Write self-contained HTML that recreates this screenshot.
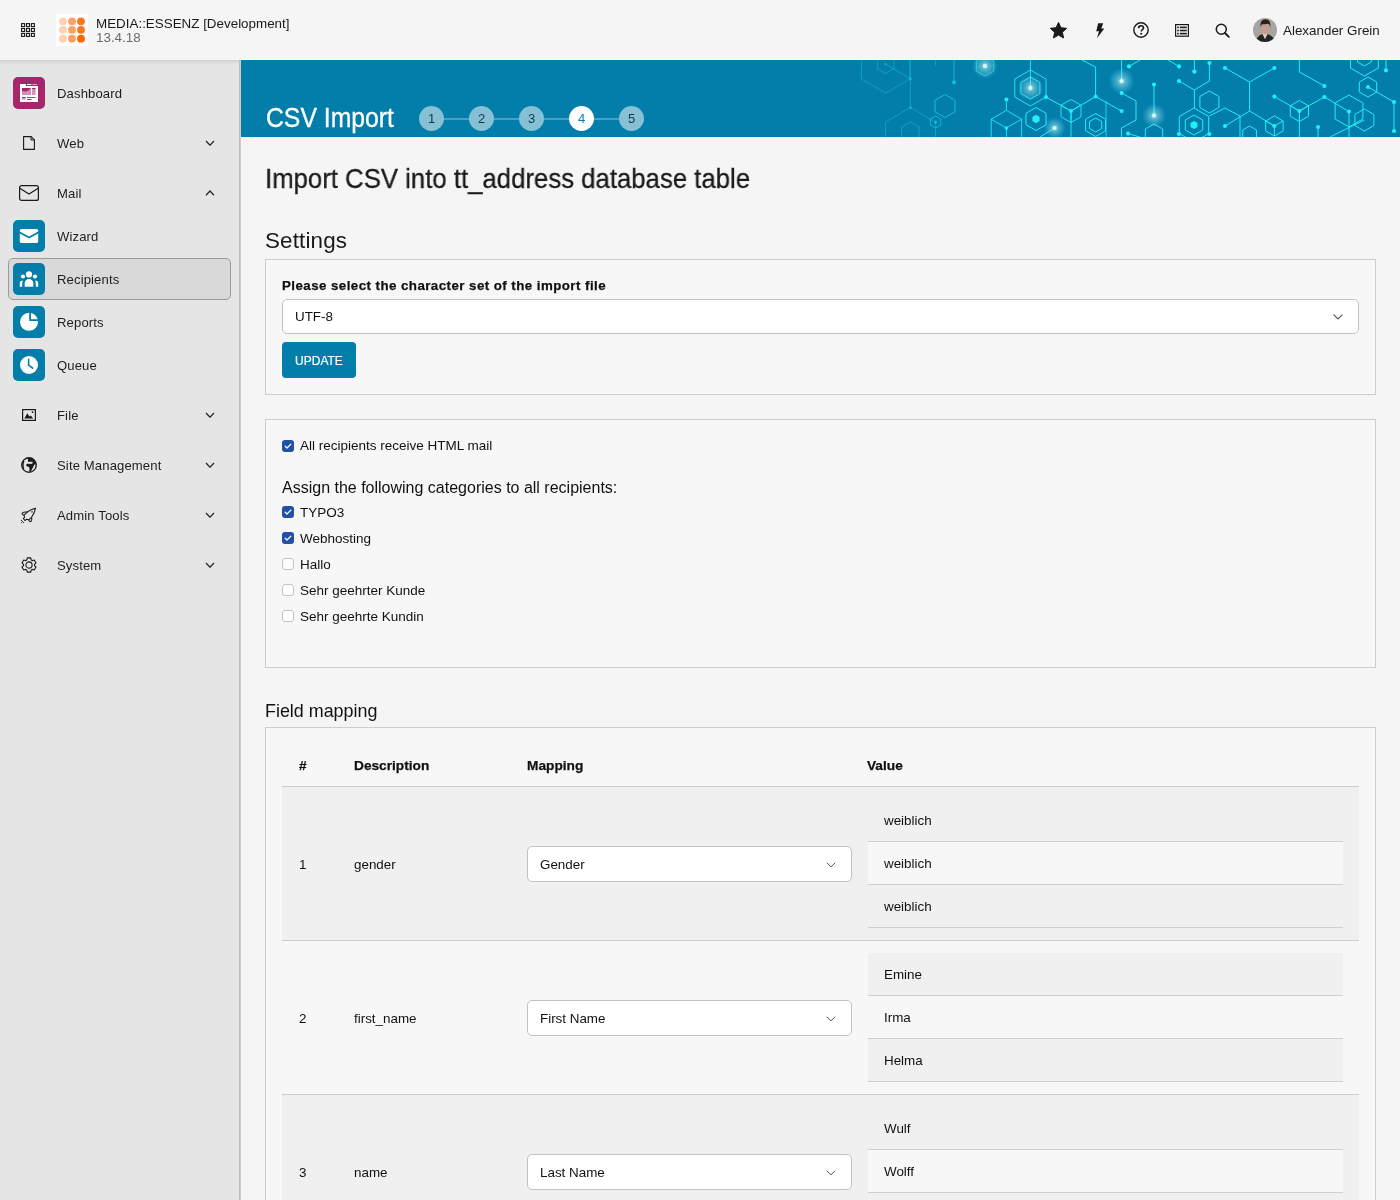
<!DOCTYPE html>
<html><head><meta charset="utf-8">
<style>
*{box-sizing:border-box;margin:0;padding:0}
html,body{width:1400px;height:1200px;overflow:hidden}
body{will-change:transform}
body{font-family:"Liberation Sans",sans-serif;color:#111;background:#f5f5f5;position:relative;font-size:13.4px}
.abs{position:absolute}
#hdr{left:0;top:0;width:1400px;height:60px;background:#f5f5f5}
#hdr:after{content:"";position:absolute;left:241px;top:59px;width:1159px;height:1px;background:#fdfdfd}
#side{left:0;top:60px;width:240px;height:1140px;background:#e5e5e5;border-right:1px solid #bcbcbc}
#side:after{content:"";position:absolute;left:0;top:0;width:239px;height:5px;background:linear-gradient(#d2d2d2,#e5e5e5)}
#sep{left:240px;top:60px;width:1px;height:1140px;background:#cfcbcb}
.mi{position:absolute;left:0;width:239px;height:40px}
.mi .t{position:absolute;left:57px;top:1px;line-height:40px;font-size:13.1px;letter-spacing:0.12px;color:#1e1e1e;white-space:nowrap}
.mi .ic{position:absolute;left:13px;top:4px;width:32px;height:32px;border-radius:5px;background:#037eab}
.mi svg.chev{position:absolute;left:205px;top:17px}
.t{white-space:nowrap}

.step{top:46px;width:25px;height:25px;border-radius:50%;background:#86c0d5;color:#13394a;font-size:13px;line-height:26px;text-align:center}
.step.cur{background:#fff;color:#037eab}
.panel{background:#f7f7f7;border:1px solid #cdcdcd}
.sel{background:#fff;border:1px solid #c2c2c2;border-radius:5px}
.sel .t{position:absolute;left:12px;top:0;line-height:33px;font-size:13.4px}
.sel svg{position:absolute}
.btn{background:#037eab;border-radius:4px;color:#fff;font-size:12px;line-height:38px;text-align:center;-webkit-text-stroke:0.2px #fff}
.th{top:758px;font-size:13.7px;line-height:16px;font-weight:bold;-webkit-text-stroke:0.25px #111;color:#111}
.cb{position:absolute;left:282px;width:12px;height:12px;border-radius:3px}
.cb.on{background:#1f51a6}
.cb.off{background:#fff;border:1px solid #c4c4c4}
.lbl{position:absolute;left:300px;margin-top:1px;font-size:13.5px;line-height:16px;white-space:nowrap}
.row{position:absolute;left:282px;width:1077px;height:154px;border-bottom:1px solid #cdcdcd}
.row.odd{background:#f0f0f0}
.row .c{position:absolute;top:1px;line-height:153px;font-size:13.4px;white-space:nowrap}
.vt{position:absolute;left:586px;top:12px;width:475px;background:#f7f7f7}
.vr{height:43px;border-bottom:1px solid #cfcfcf;line-height:44px;padding-left:16px;font-size:13.4px}
.vr.o{background:#f0f0f0}
</style></head>
<body>
<!-- HEADER -->
<div id="hdr" class="abs">
  <svg class="abs" style="left:21px;top:23px" width="14" height="14" viewBox="0 0 14 14">
    <g fill="none" stroke="#1a1a1a" stroke-width="1.1">
      <rect x="0.6" y="0.6" width="3" height="3"/><rect x="5.5" y="0.6" width="3" height="3"/><rect x="10.4" y="0.6" width="3" height="3"/>
      <rect x="0.6" y="5.5" width="3" height="3"/><rect x="5.5" y="5.5" width="3" height="3"/><rect x="10.4" y="5.5" width="3" height="3"/>
      <rect x="0.6" y="10.4" width="3" height="3"/><rect x="5.5" y="10.4" width="3" height="3"/><rect x="10.4" y="10.4" width="3" height="3"/>
    </g>
  </svg>
  <div class="abs" style="left:56px;top:14px;width:32px;height:32px;background:#fff"></div>
  <svg class="abs" style="left:56px;top:14px" width="32" height="32" viewBox="0 0 32 32">
    <g>
      <circle cx="7" cy="7.300000000000001" r="3.9" fill="#ffd0b2"/><circle cx="16" cy="7.300000000000001" r="3.9" fill="#ffa066"/><circle cx="25" cy="7.300000000000001" r="3.9" fill="#ff761a"/><circle cx="7" cy="15.850000000000001" r="3.9" fill="#ffd0b2"/><circle cx="16" cy="15.850000000000001" r="3.9" fill="#ffa066"/><circle cx="25" cy="15.850000000000001" r="3.9" fill="#ff761a"/><circle cx="7" cy="24.7" r="3.9" fill="#ffd0b2"/><circle cx="16" cy="24.7" r="3.9" fill="#ffa066"/><circle cx="25" cy="24.7" r="3.9" fill="#ff6600"/>
    </g>
  </svg>
  <div class="abs t" style="left:96px;top:16px;font-size:13.4px;line-height:16px;color:#1a1a1a">MEDIA::ESSENZ [Development]</div>
  <div class="abs t" style="left:96px;top:30px;font-size:13.4px;line-height:16px;color:#6b6b6b">13.4.18</div>

  <!-- toolbar icons -->
  <svg class="abs" style="left:1050px;top:22px" width="17" height="17" viewBox="0 0 17 17"><path fill="#1a1a1a" stroke="#1a1a1a" stroke-width="1" stroke-linejoin="round" d="M8.50 0.40 L10.91 5.68 L16.68 6.34 L12.40 10.27 L13.55 15.96 L8.50 13.10 L3.45 15.96 L4.60 10.27 L0.32 6.34 L6.09 5.68z"/></svg>
  <svg class="abs" style="left:1094px;top:23px" width="12" height="16" viewBox="0 0 12 16"><path fill="#1a1a1a" d="M4.2 0.3h5L7.3 5.6h3L3 15.2l2-7H2.2z"/></svg>
  <svg class="abs" style="left:1133px;top:22px" width="16" height="16" viewBox="0 0 16 16"><circle cx="8" cy="8" r="7.2" fill="none" stroke="#1a1a1a" stroke-width="1.4"/><path d="M5.6 6.2c0-1.5 1.1-2.4 2.5-2.4s2.4.9 2.4 2.1c0 1.7-2.2 1.8-2.2 3.5" fill="none" stroke="#1a1a1a" stroke-width="1.6"/><circle cx="8.2" cy="11.7" r="1.05" fill="#1a1a1a"/></svg>
  <svg class="abs" style="left:1175px;top:24px" width="14" height="13" viewBox="0 0 14 13"><rect x="0.6" y="0.6" width="12.8" height="11.6" fill="none" stroke="#1a1a1a" stroke-width="1.2"/><rect x="2.2" y="2.6" width="1.6" height="1.6" fill="#1a1a1a"/><rect x="2.2" y="5.7" width="1.6" height="1.6" fill="#1a1a1a"/><rect x="2.2" y="8.8" width="1.6" height="1.6" fill="#1a1a1a"/><rect x="4.8" y="2.6" width="7" height="1.6" fill="#1a1a1a"/><rect x="4.8" y="5.7" width="7" height="1.6" fill="#1a1a1a"/><rect x="4.8" y="8.8" width="7" height="1.6" fill="#1a1a1a"/></svg>
  <svg class="abs" style="left:1215px;top:23px" width="16" height="16" viewBox="0 0 16 16"><circle cx="6.3" cy="6.3" r="5" fill="none" stroke="#1a1a1a" stroke-width="1.5"/><path d="M10 10l3.8 3.8" stroke="#1a1a1a" stroke-width="1.9" stroke-linecap="round"/></svg>
  <!-- avatar -->
  <svg class="abs" style="left:1253px;top:18px" width="24" height="24" viewBox="0 0 24 24">
    <defs><clipPath id="av"><circle cx="12" cy="12" r="12"/></clipPath></defs>
    <g clip-path="url(#av)"><rect width="24" height="24" fill="#a6a5a3"/><path d="M2.5 24C3.5 19.5 6.5 17 9.5 16L12 21 14.5 16C17 17 20 18.5 21.8 22V24z" fill="#242424"/><path d="M9.3 15.3L12 21l2.7-5.7z" fill="#e2cbb6"/><ellipse cx="12.3" cy="10.8" rx="4.3" ry="5.2" fill="#c49e90"/><path d="M7.6 9.2C7 4 9 1.3 12.5 1.3S17.9 4 17.3 9.6C16.9 7.2 16.2 6.3 15.2 5.7 13 6.3 10.6 6 8.7 6.5 8.1 7.3 7.8 8.2 7.6 9.2z" fill="#2a211c"/></g>
  </svg>
  <div class="abs t" style="left:1283px;top:23px;font-size:13.4px;line-height:16px;color:#1a1a1a">Alexander Grein</div>
</div>

<!-- SIDEBAR -->
<div id="side" class="abs"></div>
<div id="sep" class="abs"></div>

<div id="menu">
<div class="abs" style="left:8px;top:258px;width:223px;height:42px;border:1px solid #9a9a9a;border-radius:5px;background:#d9d9d9"></div>
<div class="mi" style="top:73px"><div class="ic" style="background:#a5266b"><svg width="32" height="32" viewBox="0 0 32 32" style="position:absolute;left:0;top:0"><path fill="#fff" d="M7 7h5.8v1.9H25V25H7z"/><rect x="13.8" y="7" width="4.6" height="1" fill="#fff"/><rect x="19.4" y="7" width="4.6" height="1" fill="#e2aacb"/><rect x="9" y="11" width="8.8" height="6.9" fill="#a5266b"/><path fill="#d48fb8" d="M9 14.6c1-.6 1.8-.9 2.5-.4.8.6 1.5.2 2.3 0 1.5-.4 3-2 4-3.2v6.9H9z"/><rect x="19" y="11" width="3.6" height="6.9" fill="#d48fb8"/><rect x="19" y="11" width="3.6" height="1" fill="#a5266b"/><rect x="9" y="20" width="3.6" height="2.6" fill="#d48fb8"/><rect x="9" y="20" width="3.6" height="0.9" fill="#a5266b"/><rect x="14" y="20" width="8.6" height="0.9" fill="#a5266b"/><rect x="14" y="22" width="4.6" height="0.9" fill="#a5266b"/></svg></div><div class="t">Dashboard</div></div>
<div class="mi" style="top:123px"><svg style="position:absolute;left:23px;top:13px" width="12" height="14" viewBox="0 0 12 14"><path d="M.6.6h7.6L11.4 3.8v9.6H.6z" fill="none" stroke="#1a1a1a" stroke-width="1.1" stroke-linejoin="round"/><path d="M8 .6v3.4h3.4" fill="none" stroke="#1a1a1a" stroke-width="1"/></svg><div class="t">Web</div><svg class="chev" width="10" height="6" viewBox="0 0 10 6"><path d="M1 1L5 5.2 9 1" fill="none" stroke="#2a2a2a" stroke-width="1.3"/></svg></div>
<div class="mi" style="top:173px"><svg style="position:absolute;left:19px;top:12px" width="20" height="16" viewBox="0 0 20 16"><rect x=".6" y=".6" width="18.8" height="14.8" rx="2" fill="none" stroke="#1a1a1a" stroke-width="1.2"/><path d="M.8 3.2L10 9l9.2-5.8" fill="none" stroke="#1a1a1a" stroke-width="1.2"/></svg><div class="t">Mail</div><svg class="chev" width="10" height="6" viewBox="0 0 10 6"><path d="M1 5.2L5 1l4 4.2" fill="none" stroke="#2a2a2a" stroke-width="1.3"/></svg></div>
<div class="mi" style="top:216px"><div class="ic"><svg width="32" height="32" viewBox="0 0 32 32" style="position:absolute;left:0;top:0"><path fill="#fff" d="M6.8 10.8c0-1 .8-1.8 1.8-1.8h14.8c1 0 1.8.8 1.8 1.8v.6L16 16.6 6.8 11.4z"/><path fill="#fff" d="M6.8 13.4L16 18.6l9.2-5.2v7.8c0 1-.8 1.8-1.8 1.8H8.6c-1 0-1.8-.8-1.8-1.8z"/></svg></div><div class="t">Wizard</div></div>
<div class="mi" style="top:259px"><div class="ic"><svg width="32" height="32" viewBox="0 0 32 32" style="position:absolute;left:0;top:0"><g fill="#fff"><circle cx="16" cy="11.4" r="3.1"/><circle cx="10" cy="13.5" r="2.1"/><circle cx="22" cy="13.5" r="2.1"/><path d="M11.7 23.7v-3.5c0-2.6 1.9-4.3 4.3-4.3s4.3 1.7 4.3 4.3v3.5z"/><path d="M6.8 23.7v-3.3c0-1.3.6-2.3 1.6-2.7l1.6.1c-.5.8-.8 1.7-.8 2.8v3.1z"/><path d="M25.2 23.7v-3.3c0-1.3-.6-2.3-1.6-2.7l-1.6.1c.5.8.8 1.7.8 2.8v3.1z"/></g></svg></div><div class="t">Recipients</div></div>
<div class="mi" style="top:302px"><div class="ic"><svg width="32" height="32" viewBox="0 0 32 32" style="position:absolute;left:0;top:0"><path fill="#fff" d="M16.2 6.8V14.9H24.95A9 9 0 1 1 16.2 6.8z"/><path fill="#fff" d="M18 7.03V13.3H24.65A9 9 0 0 0 18 7.03z"/></svg></div><div class="t">Reports</div></div>
<div class="mi" style="top:345px"><div class="ic"><svg width="32" height="32" viewBox="0 0 32 32" style="position:absolute;left:0;top:0"><circle cx="16" cy="16" r="9" fill="#fff"/><path d="M15.6 10.4V16l4 3.2" fill="none" stroke="#037eab" stroke-width="1.6" stroke-linecap="round"/></svg></div><div class="t">Queue</div></div>
<div class="mi" style="top:395px"><svg style="position:absolute;left:22px;top:14px" width="14" height="12" viewBox="0 0 14 12"><rect x=".6" y=".6" width="12.8" height="10.8" fill="none" stroke="#1a1a1a" stroke-width="1.2"/><path d="M2.3 9.6l3-5.3 2.1 3.3 1.4-1.2 2.4 3.2z" fill="#1a1a1a"/><circle cx="10.6" cy="3.1" r=".95" fill="#1a1a1a"/></svg><div class="t">File</div><svg class="chev" width="10" height="6" viewBox="0 0 10 6"><path d="M1 1L5 5.2 9 1" fill="none" stroke="#2a2a2a" stroke-width="1.3"/></svg></div>
<div class="mi" style="top:445px"><svg style="position:absolute;left:21px;top:12px" width="16" height="16" viewBox="0 0 16 16"><circle cx="8" cy="8" r="7.25" fill="none" stroke="#1a1a1a" stroke-width="1.4"/><path fill="#1a1a1a" d="M7.2 1C10 .7 13.4 2 14.7 6.2L14.6 6.8 13 8.3 10 14.3 9.3 14.9 8.4 14.6 8.4 11 8 9.8C6.6 9.7 5.3 9.5 5.2 8.2 5.2 7.1 6 6.6 7.2 6.7L11.4 6.7 11.6 4.8 7.1 4.8C6.7 3.5 6.8 2.3 7.2 1z"/><rect x="7.6" y="5.1" width="3.4" height="1.3" fill="#e5e5e5"/><path fill="#1a1a1a" d="M2.4 3.4C1 5.5.9 9.4 2.6 12.6L3.3 12.1C2.4 9.4 2.4 6.2 3.5 4.1z"/></svg><div class="t">Site Management</div><svg class="chev" width="10" height="6" viewBox="0 0 10 6"><path d="M1 1L5 5.2 9 1" fill="none" stroke="#2a2a2a" stroke-width="1.3"/></svg></div>
<div class="mi" style="top:495px"><svg style="position:absolute;left:21px;top:12px" width="16" height="17" viewBox="0 0 16 17"><g fill="none" stroke="#1a1a1a" stroke-width="1.05" stroke-linejoin="round"><path d="M14.5 1.2C11.3 2 8.7 3.2 6.7 4.8L2.7 5.2Q1 5.5 1 6.8L3.2 8.6 3.5 10.4 2.4 11.7 3.9 13.5 5.4 12.3 7.3 12.6 9 14.8Q10.5 14.7 10.7 13L10.7 10C12.5 7.6 14 4.6 14.5 1.2z"/><path d="M2.9 8.2L6.7 4.8M7.9 12.9L10.7 10"/></g><rect x="10.4" y="4.2" width="1.3" height="1.3" fill="#1a1a1a"/><g fill="#1a1a1a"><circle cx=".6" cy="13.4" r=".55"/><circle cx="1.6" cy="14.5" r=".55"/><circle cx="2.6" cy="15.6" r=".55"/><circle cx=".6" cy="15.6" r=".55"/></g></svg><div class="t">Admin Tools</div><svg class="chev" width="10" height="6" viewBox="0 0 10 6"><path d="M1 1L5 5.2 9 1" fill="none" stroke="#2a2a2a" stroke-width="1.3"/></svg></div>
<div class="mi" style="top:545px"><svg style="position:absolute;left:21px;top:12px" width="16" height="16" viewBox="0 0 16 16"><path d="M5.76 2.98 L6.36 0.89 L9.64 0.89 L10.24 2.98 L11.23 3.55 L13.34 3.02 L14.98 5.87 L13.47 7.43 L13.47 8.57 L14.98 10.13 L13.34 12.98 L11.23 12.45 L10.24 13.02 L9.64 15.11 L6.36 15.11 L5.76 13.02 L4.77 12.45 L2.66 12.98 L1.02 10.13 L2.53 8.57 L2.53 7.43 L1.02 5.87 L2.66 3.02 L4.77 3.55z" fill="none" stroke="#1a1a1a" stroke-width="1.1" stroke-linejoin="miter"/><circle cx="8" cy="8" r="3.1" fill="none" stroke="#1a1a1a" stroke-width="1.1"/></svg><div class="t">System</div><svg class="chev" width="10" height="6" viewBox="0 0 10 6"><path d="M1 1L5 5.2 9 1" fill="none" stroke="#2a2a2a" stroke-width="1.3"/></svg></div>
</div>

<!-- MAIN -->
<div id="main">
<!-- banner -->
<div class="abs" style="left:241px;top:60px;width:1159px;height:77px;background:#037eab;overflow:hidden">
  <svg id="pat" class="abs" style="left:0;top:0" width="1159" height="77" viewBox="241 60 1159 77"><defs><radialGradient id="gl"><stop offset="0" stop-color="#fff" stop-opacity="0.95"/><stop offset="0.25" stop-color="#cff" stop-opacity="0.45"/><stop offset="1" stop-color="#8ef" stop-opacity="0"/></radialGradient></defs><polygon points="885.6,37.0 909.8,51.0 909.8,79.0 885.6,93.0 861.4,79.0 861.4,51.0" fill="none" stroke="#22eef4" stroke-width="1" opacity="0.3"/><polygon points="885.6,54.5 893.8,59.2 893.8,68.8 885.6,73.5 877.4,68.8 877.4,59.2" fill="none" stroke="#22eef4" stroke-width="1" opacity="0.3"/><circle cx="885.6" cy="64.0" r="1.5" fill="#22eef4" opacity="0.3"/><polyline points="910.4,60.0 910.4,107.6" fill="none" stroke="#22eef4" stroke-width="1" opacity="0.3"/><circle cx="910.4" cy="78.8" r="1.6" fill="#22eef4" opacity="0.3"/><circle cx="910.4" cy="107.6" r="1.6" fill="#22eef4" opacity="0.3"/><polyline points="885.6,64.0 910.4,78.8" fill="none" stroke="#22eef4" stroke-width="1" opacity="0.3"/><polyline points="910.4,107.6 885.6,122.0 885.6,137.0" fill="none" stroke="#22eef4" stroke-width="1" opacity="0.3"/><polyline points="910.4,107.6 935.6,122.0 935.6,137.0" fill="none" stroke="#22eef4" stroke-width="1" opacity="0.3"/><polygon points="910.4,122.0 919.1,127.0 919.1,137.0 910.4,142.0 901.7,137.0 901.7,127.0" fill="none" stroke="#22eef4" stroke-width="1" opacity="0.3"/><polygon points="935.6,116.0 940.8,119.0 940.8,125.0 935.6,128.0 930.4,125.0 930.4,119.0" fill="none" stroke="#22eef4" stroke-width="1" opacity="0.5"/><circle cx="935.6" cy="122.0" r="1.6" fill="#22eef4" opacity="0.5"/><polyline points="935.6,60.0 935.6,66.0" fill="none" stroke="#22eef4" stroke-width="1" opacity="0.3"/><polyline points="954.0,60.0 954.0,82.6" fill="none" stroke="#22eef4" stroke-width="1" opacity="0.55"/><circle cx="954.0" cy="82.6" r="2" fill="#22eef4" opacity="0.55"/><polygon points="945.0,94.5 955.0,100.2 955.0,111.8 945.0,117.5 935.0,111.8 935.0,100.2" fill="none" stroke="#22eef4" stroke-width="1" opacity="0.55"/><polygon points="985.0,56.0 993.7,61.0 993.7,71.0 985.0,76.0 976.3,71.0 976.3,61.0" fill="none" stroke="#22eef4" stroke-width="1" opacity="0.6"/><polygon points="1006.4,110.4 1021.6,119.2 1021.6,136.8 1006.4,145.6 991.2,136.8 991.2,119.2" fill="none" stroke="#22eef4" stroke-width="1" opacity="0.85"/><polyline points="1006.4,128.0 1006.4,145.6" fill="none" stroke="#22eef4" stroke-width="1" opacity="0.85"/><polyline points="1006.4,128.0 991.2,119.2" fill="none" stroke="#22eef4" stroke-width="1" opacity="0.85"/><polyline points="1006.4,128.0 1021.6,119.2" fill="none" stroke="#22eef4" stroke-width="1" opacity="0.85"/><polyline points="1006.4,99.4 1006.4,110.4" fill="none" stroke="#22eef4" stroke-width="1" opacity="0.85"/><circle cx="1006.4" cy="99.4" r="2" fill="#22eef4" opacity="1"/><circle cx="1006.4" cy="128.0" r="1.8" fill="#22eef4" opacity="1"/><polygon points="1030.4,70.0 1046.0,79.0 1046.0,97.0 1030.4,106.0 1014.8,97.0 1014.8,79.0" fill="none" stroke="#22eef4" stroke-width="1" opacity="0.9"/><polygon points="1030.4,77.0 1039.9,82.5 1039.9,93.5 1030.4,99.0 1020.9,93.5 1020.9,82.5" fill="none" stroke="#22eef4" stroke-width="1" opacity="0.9"/><polyline points="1030.4,60.0 1030.4,88.0" fill="none" stroke="#22eef4" stroke-width="1" opacity="0.9"/><circle cx="1046.0" cy="97.0" r="2" fill="#22eef4" opacity="1"/><polyline points="1046.0,97.0 1071.0,111.0" fill="none" stroke="#22eef4" stroke-width="1" opacity="1"/><circle cx="1071.0" cy="111.0" r="2" fill="#22eef4" opacity="1"/><polygon points="1071.0,99.5 1081.0,105.2 1081.0,116.8 1071.0,122.5 1061.0,116.8 1061.0,105.2" fill="none" stroke="#22eef4" stroke-width="1" opacity="0.9"/><polyline points="1071.0,111.0 1071.0,122.5" fill="none" stroke="#22eef4" stroke-width="1" opacity="0.9"/><polyline points="1071.0,111.0 1061.0,105.2" fill="none" stroke="#22eef4" stroke-width="1" opacity="0.9"/><polyline points="1071.0,111.0 1081.0,105.2" fill="none" stroke="#22eef4" stroke-width="1" opacity="0.9"/><polyline points="1071.0,111.0 1071.0,137.0" fill="none" stroke="#22eef4" stroke-width="1" opacity="0.9"/><circle cx="1095.6" cy="96.6" r="2" fill="#22eef4" opacity="1"/><polyline points="1071.0,111.0 1095.6,96.6" fill="none" stroke="#22eef4" stroke-width="1" opacity="1"/><polyline points="1095.6,96.6 1095.6,67.0 1082.0,60.0" fill="none" stroke="#22eef4" stroke-width="1" opacity="1"/><polyline points="1095.6,96.6 1121.6,111.0" fill="none" stroke="#22eef4" stroke-width="1" opacity="1"/><polygon points="1036.0,107.5 1046.0,113.2 1046.0,124.8 1036.0,130.5 1026.0,124.8 1026.0,113.2" fill="none" stroke="#22eef4" stroke-width="1" opacity="1"/><polygon points="1036.0,114.8 1039.6,116.9 1039.6,121.1 1036.0,123.2 1032.4,121.1 1032.4,116.9" fill="#22eef4" opacity="1"/><polyline points="1054.6,128.0 1040.0,137.0" fill="none" stroke="#22eef4" stroke-width="1" opacity="1"/><polygon points="1095.6,113.5 1105.6,119.2 1105.6,130.8 1095.6,136.5 1085.6,130.8 1085.6,119.2" fill="none" stroke="#22eef4" stroke-width="1" opacity="1"/><polygon points="1095.6,118.0 1101.7,121.5 1101.7,128.5 1095.6,132.0 1089.5,128.5 1089.5,121.5" fill="none" stroke="#22eef4" stroke-width="1" opacity="1"/><polyline points="1106.0,101.0 1106.0,137.0" fill="none" stroke="#22eef4" stroke-width="1" opacity="0.8"/><polyline points="1121.6,60.0 1121.6,81.0" fill="none" stroke="#22eef4" stroke-width="1" opacity="1"/><circle cx="1129.0" cy="66.4" r="2.1" fill="#22eef4" opacity="1"/><polyline points="1129.0,66.4 1140.0,60.0" fill="none" stroke="#22eef4" stroke-width="1" opacity="1"/><polyline points="1168.0,60.0 1179.0,66.4" fill="none" stroke="#22eef4" stroke-width="1" opacity="1"/><circle cx="1179.0" cy="66.4" r="2.1" fill="#22eef4" opacity="1"/><polyline points="1194.4,60.0 1194.4,71.6" fill="none" stroke="#22eef4" stroke-width="1" opacity="1"/><circle cx="1194.4" cy="71.6" r="2.2" fill="#22eef4" opacity="1"/><circle cx="1209.4" cy="63.0" r="2.1" fill="#22eef4" opacity="1"/><polyline points="1209.4,63.0 1209.4,81.0 1194.4,90.0 1179.0,81.0" fill="none" stroke="#22eef4" stroke-width="1" opacity="1"/><circle cx="1179.0" cy="81.0" r="2.1" fill="#22eef4" opacity="1"/><polyline points="1194.4,90.0 1194.4,108.0" fill="none" stroke="#22eef4" stroke-width="1" opacity="1"/><circle cx="1154.0" cy="84.6" r="2.1" fill="#22eef4" opacity="1"/><polyline points="1154.0,84.6 1154.0,115.6" fill="none" stroke="#22eef4" stroke-width="1" opacity="1"/><polygon points="1209.4,91.0 1218.9,96.5 1218.9,107.5 1209.4,113.0 1199.9,107.5 1199.9,96.5" fill="none" stroke="#22eef4" stroke-width="1" opacity="1"/><polygon points="1194.0,108.0 1208.7,116.5 1208.7,133.5 1194.0,142.0 1179.3,133.5 1179.3,116.5" fill="none" stroke="#22eef4" stroke-width="1" opacity="1"/><polygon points="1194.0,115.0 1202.7,120.0 1202.7,130.0 1194.0,135.0 1185.3,130.0 1185.3,120.0" fill="none" stroke="#22eef4" stroke-width="1" opacity="1"/><polygon points="1194.0,121.0 1197.5,123.0 1197.5,127.0 1194.0,129.0 1190.5,127.0 1190.5,123.0" fill="#22eef4" opacity="1"/><polyline points="1121.6,93.0 1136.0,101.0 1136.0,120.0 1121.6,128.0 1121.6,137.0" fill="none" stroke="#22eef4" stroke-width="1" opacity="1"/><circle cx="1121.6" cy="93.0" r="2.1" fill="#22eef4" opacity="1"/><circle cx="1121.6" cy="111.0" r="2.1" fill="#22eef4" opacity="1"/><circle cx="1128.0" cy="133.6" r="2.1" fill="#22eef4" opacity="1"/><polyline points="1128.0,133.6 1140.0,137.0" fill="none" stroke="#22eef4" stroke-width="1" opacity="1"/><polygon points="1154.0,124.0 1162.7,129.0 1162.7,139.0 1154.0,144.0 1145.3,139.0 1145.3,129.0" fill="none" stroke="#22eef4" stroke-width="1" opacity="1"/><circle cx="1179.0" cy="134.0" r="2.1" fill="#22eef4" opacity="1"/><circle cx="1209.4" cy="134.0" r="2.1" fill="#22eef4" opacity="1"/><circle cx="1225.0" cy="68.0" r="2.1" fill="#22eef4" opacity="1"/><circle cx="1274.4" cy="68.0" r="2.1" fill="#22eef4" opacity="1"/><polyline points="1225.0,68.0 1249.6,82.0 1274.4,68.0" fill="none" stroke="#22eef4" stroke-width="1" opacity="1"/><polyline points="1249.6,82.0 1249.6,111.0" fill="none" stroke="#22eef4" stroke-width="1" opacity="1"/><polyline points="1225.0,126.0 1249.6,111.0 1274.4,126.0" fill="none" stroke="#22eef4" stroke-width="1" opacity="1"/><circle cx="1225.0" cy="126.0" r="2.1" fill="#22eef4" opacity="1"/><polyline points="1209.4,116.0 1225.0,108.0 1240.0,116.0 1240.0,137.0" fill="none" stroke="#22eef4" stroke-width="1" opacity="1"/><polygon points="1274.4,116.0 1283.1,121.0 1283.1,131.0 1274.4,136.0 1265.7,131.0 1265.7,121.0" fill="none" stroke="#22eef4" stroke-width="1" opacity="1"/><polyline points="1274.4,126.0 1274.4,136.0" fill="none" stroke="#22eef4" stroke-width="1" opacity="1"/><polyline points="1274.4,126.0 1265.7,121.0" fill="none" stroke="#22eef4" stroke-width="1" opacity="1"/><polyline points="1274.4,126.0 1283.1,121.0" fill="none" stroke="#22eef4" stroke-width="1" opacity="1"/><circle cx="1274.4" cy="126.0" r="2.1" fill="#22eef4" opacity="1"/><polygon points="1249.6,126.0 1256.5,130.0 1256.5,138.0 1249.6,142.0 1242.7,138.0 1242.7,130.0" fill="none" stroke="#22eef4" stroke-width="1" opacity="1"/><polyline points="1299.4,60.0 1299.4,72.0 1324.4,86.0" fill="none" stroke="#22eef4" stroke-width="1" opacity="1"/><circle cx="1324.4" cy="86.0" r="2.1" fill="#22eef4" opacity="1"/><circle cx="1274.4" cy="96.6" r="2.1" fill="#22eef4" opacity="1"/><polyline points="1274.4,96.6 1299.4,111.0" fill="none" stroke="#22eef4" stroke-width="1" opacity="1"/><polygon points="1299.4,100.5 1308.5,105.8 1308.5,116.2 1299.4,121.5 1290.3,116.2 1290.3,105.8" fill="none" stroke="#22eef4" stroke-width="1" opacity="1"/><polyline points="1299.4,111.0 1299.4,121.5" fill="none" stroke="#22eef4" stroke-width="1" opacity="1"/><polyline points="1299.4,111.0 1290.3,105.8" fill="none" stroke="#22eef4" stroke-width="1" opacity="1"/><polyline points="1299.4,111.0 1308.5,105.8" fill="none" stroke="#22eef4" stroke-width="1" opacity="1"/><polyline points="1299.4,111.0 1299.4,137.0" fill="none" stroke="#22eef4" stroke-width="1" opacity="1"/><circle cx="1299.4" cy="111.0" r="2.1" fill="#22eef4" opacity="1"/><polyline points="1299.4,111.0 1324.4,97.0 1349.0,111.6 1349.0,137.0" fill="none" stroke="#22eef4" stroke-width="1" opacity="1"/><circle cx="1324.4" cy="97.0" r="2.1" fill="#22eef4" opacity="1"/><circle cx="1349.0" cy="111.6" r="2.1" fill="#22eef4" opacity="1"/><polygon points="1349.0,95.0 1362.9,103.0 1362.9,119.0 1349.0,127.0 1335.1,119.0 1335.1,103.0" fill="none" stroke="#22eef4" stroke-width="1" opacity="1"/><polygon points="1364.4,109.0 1373.9,114.5 1373.9,125.5 1364.4,131.0 1354.9,125.5 1354.9,114.5" fill="none" stroke="#22eef4" stroke-width="1" opacity="1"/><polygon points="1364.4,44.0 1378.3,52.0 1378.3,68.0 1364.4,76.0 1350.5,68.0 1350.5,52.0" fill="none" stroke="#22eef4" stroke-width="1" opacity="1"/><polygon points="1364.4,50.0 1371.3,54.0 1371.3,62.0 1364.4,66.0 1357.5,62.0 1357.5,54.0" fill="none" stroke="#22eef4" stroke-width="1" opacity="1"/><polygon points="1368.0,77.0 1376.7,82.0 1376.7,92.0 1368.0,97.0 1359.3,92.0 1359.3,82.0" fill="none" stroke="#22eef4" stroke-width="1" opacity="1"/><circle cx="1368.0" cy="87.0" r="2.1" fill="#22eef4" opacity="1"/><polyline points="1368.0,87.0 1394.0,102.0 1394.0,131.0" fill="none" stroke="#22eef4" stroke-width="1" opacity="1"/><circle cx="1394.0" cy="102.0" r="2.1" fill="#22eef4" opacity="1"/><circle cx="1394.0" cy="131.0" r="2.1" fill="#22eef4" opacity="1"/><circle cx="1386.0" cy="70.4" r="2.1" fill="#22eef4" opacity="1"/><polyline points="1386.0,60.0 1386.0,70.4" fill="none" stroke="#22eef4" stroke-width="1" opacity="1"/><circle cx="1318.0" cy="127.0" r="2.1" fill="#22eef4" opacity="1"/><polyline points="1318.0,127.0 1318.0,137.0" fill="none" stroke="#22eef4" stroke-width="1" opacity="1"/><polyline points="1330.0,137.0 1364.4,120.0" fill="none" stroke="#22eef4" stroke-width="1" opacity="1"/><circle cx="985.0" cy="66.0" r="13" fill="url(#gl)"/><circle cx="985.0" cy="66.0" r="2" fill="#d8fbfc"/><circle cx="1030.4" cy="88.0" r="13" fill="url(#gl)"/><circle cx="1030.4" cy="88.0" r="2" fill="#d8fbfc"/><circle cx="1054.6" cy="128.0" r="11" fill="url(#gl)"/><circle cx="1054.6" cy="128.0" r="2" fill="#d8fbfc"/><circle cx="1121.6" cy="81.0" r="13" fill="url(#gl)"/><circle cx="1121.6" cy="81.0" r="2" fill="#d8fbfc"/><circle cx="1154.0" cy="115.6" r="12" fill="url(#gl)"/><circle cx="1154.0" cy="115.6" r="2" fill="#d8fbfc"/></svg>
  <div class="abs t" style="left:25px;top:43px;font-size:27.5px;line-height:30px;transform:scaleX(0.9);transform-origin:0 0;-webkit-text-stroke:0.3px #fff;color:#fff">CSV Import</div>
  <div class="abs" style="left:190px;top:58px;width:200px;height:2px;background:#4aa0c3"></div>
  <div class="step abs" style="left:178px">1</div>
  <div class="step abs" style="left:228px">2</div>
  <div class="step abs" style="left:278px">3</div>
  <div class="step abs cur" style="left:328px">4</div>
  <div class="step abs" style="left:378px">5</div>
</div>
<div class="abs t" style="left:265px;top:164px;font-size:27.5px;line-height:30px;transform:scaleX(0.936);transform-origin:0 0;-webkit-text-stroke:0.3px #1a1a1a;color:#1a1a1a">Import CSV into tt_address database table</div>
<div class="abs t" style="left:265px;top:228px;font-size:22.4px;line-height:26px;letter-spacing:0.15px;color:#1a1a1a">Settings</div>

<!-- panel 1 -->
<div class="abs panel" style="left:265px;top:259px;width:1111px;height:136px"></div>
<div class="abs t" style="left:282px;top:278px;font-size:13.3px;line-height:16px;font-weight:bold;letter-spacing:0.45px;-webkit-text-stroke:0.25px #111;color:#111">Please select the character set of the import file</div>
<div class="abs sel" style="left:282px;top:299px;width:1077px;height:35px"><span class="t">UTF-8</span><svg style="left:1050px;top:14px" width="10" height="6" viewBox="0 0 10 6"><path d="M.6.6L5 5 9.4.6" fill="none" stroke="#555" stroke-width="1.1"/></svg></div>
<div class="abs btn" style="left:282px;top:342px;width:74px;height:36px">UPDATE</div>

<!-- panel 2 -->
<div class="abs panel" style="left:265px;top:419px;width:1111px;height:249px"></div>
<div class="cb on" style="top:439.5px"><svg width="12" height="12" viewBox="0 0 12 12" style="position:absolute;left:0;top:0"><path d="M3.1 6.1l1.9 1.9 3.9-3.9" fill="none" stroke="#fff" stroke-width="1.3" stroke-linecap="round" stroke-linejoin="round"/></svg></div><div class="lbl" style="top:437px">All recipients receive HTML mail</div>
<div class="cb on" style="top:505.5px"><svg width="12" height="12" viewBox="0 0 12 12" style="position:absolute;left:0;top:0"><path d="M3.1 6.1l1.9 1.9 3.9-3.9" fill="none" stroke="#fff" stroke-width="1.3" stroke-linecap="round" stroke-linejoin="round"/></svg></div><div class="lbl" style="top:504px">TYPO3</div>
<div class="cb on" style="top:531.5px"><svg width="12" height="12" viewBox="0 0 12 12" style="position:absolute;left:0;top:0"><path d="M3.1 6.1l1.9 1.9 3.9-3.9" fill="none" stroke="#fff" stroke-width="1.3" stroke-linecap="round" stroke-linejoin="round"/></svg></div><div class="lbl" style="top:530px">Webhosting</div>
<div class="cb off" style="top:557.5px"></div><div class="lbl" style="top:556px">Hallo</div>
<div class="cb off" style="top:583.5px"></div><div class="lbl" style="top:582px">Sehr geehrter Kunde</div>
<div class="cb off" style="top:609.5px"></div><div class="lbl" style="top:608px">Sehr geehrte Kundin</div>
<div class="abs t" style="left:282px;top:479px;font-size:16px;line-height:18px">Assign the following categories to all recipients:</div>

<div class="abs t" style="left:265px;top:701px;font-size:17.9px;line-height:20px">Field mapping</div>
<!-- panel 3 -->
<div class="abs panel" style="left:265px;top:727px;width:1111px;height:500px"></div>
<div class="abs t th" style="left:299px">#</div>
<div class="abs t th" style="left:354px">Description</div>
<div class="abs t th" style="left:527px">Mapping</div>
<div class="abs t th" style="left:867px">Value</div>
<div class="abs" style="left:282px;top:786px;width:1077px;height:1px;background:#cdcdcd"></div>
<div class="row odd" style="top:787px"><div class="c" style="left:17px">1</div><div class="c" style="left:72px">gender</div><div class="sel" style="position:absolute;left:245px;top:59px;width:325px;height:36px"><span class="t" style="line-height:36px">Gender</span><svg style="left:298px;top:15px" width="10" height="6" viewBox="0 0 10 6"><path d="M.8.8L5 4.8 9.2.8" fill="none" stroke="#555" stroke-width="1"/></svg></div><div class="vt"><div class="vr o">weiblich</div><div class="vr ">weiblich</div><div class="vr o">weiblich</div></div></div>
<div class="row " style="top:941px"><div class="c" style="left:17px">2</div><div class="c" style="left:72px">first_name</div><div class="sel" style="position:absolute;left:245px;top:59px;width:325px;height:36px"><span class="t" style="line-height:36px">First Name</span><svg style="left:298px;top:15px" width="10" height="6" viewBox="0 0 10 6"><path d="M.8.8L5 4.8 9.2.8" fill="none" stroke="#555" stroke-width="1"/></svg></div><div class="vt"><div class="vr o">Emine</div><div class="vr ">Irma</div><div class="vr o">Helma</div></div></div>
<div class="row odd" style="top:1095px"><div class="c" style="left:17px">3</div><div class="c" style="left:72px">name</div><div class="sel" style="position:absolute;left:245px;top:59px;width:325px;height:36px"><span class="t" style="line-height:36px">Last Name</span><svg style="left:298px;top:15px" width="10" height="6" viewBox="0 0 10 6"><path d="M.8.8L5 4.8 9.2.8" fill="none" stroke="#555" stroke-width="1"/></svg></div><div class="vt"><div class="vr o">Wulf</div><div class="vr ">Wolff</div><div class="vr o">Wolf</div></div></div>
</div>
</body></html>
